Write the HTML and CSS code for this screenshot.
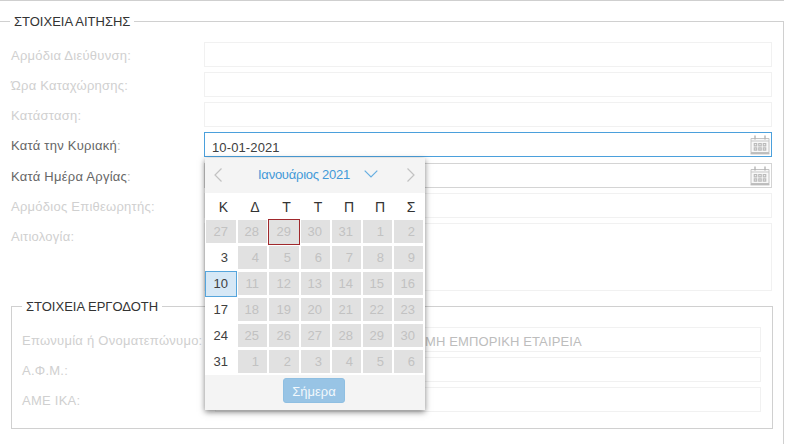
FILE: index.html
```html
<!DOCTYPE html>
<html lang="el">
<head>
    <meta charset="UTF-8">
    <meta name="viewport" content="width=device-width, initial-scale=1.0">
    <title>Στοιχεία Αίτησης</title>
    <link rel="stylesheet" href="styles.css">
</head>

<body>
    <svg width="0" height="0" class="defs">
        <symbol id="calendar" viewBox="0 0 20 20">
            <path d="M1 3.5h18v14H1z" fill="#f8f8f8" stroke="#c4c4c4"/>
            <path d="M1 6h18" stroke="#c8c8c8"/>
            <path d="M.5 18.500h19" stroke="#bcbcbc" stroke-width="1.8"/>
            <path d="M5 .5v4M15 .5v4" stroke="#b4b4b4" stroke-width="1.4"/>
            <path d="M3.700 9.7h12.600M3.700 14h12.600" stroke="#bababa" stroke-width="3.400" stroke-dasharray="3.6 .9"/>
            <path d="M4.800 9.7h11M4.800 14h11" stroke="#ececec" stroke-width="1.2" stroke-dasharray="1.4 3.1"/>
        </symbol>
    </svg>

    <form class="request">
        <div class="group outer">
            <div class="legend">ΣΤΟΙΧΕΙΑ ΑΙΤΗΣΗΣ</div>
            <div class="row disabled"><label>Αρμόδια Διεύθυνση<i>:</i></label><div class="field"></div></div>
            <div class="row disabled"><label>Ώρα Καταχώρησης<i>:</i></label><div class="field"></div></div>
            <div class="row disabled"><label>Κατάσταση<i>:</i></label><div class="field"></div></div>
            <div class="row sunday">
                <label>Κατά την Κυριακή<i>:</i></label>
                <div class="field focus">
                    <span class="value">10-01-2021</span>
                    <svg class="trigger"><use href="#calendar"/></svg>

                    <div class="picker">
                        <div class="picker-head">
                            <svg class="arrow" viewBox="0 0 8 14"><path d="M7.5 .5L1 7l6.5 6.5"/></svg>
                            <span class="month">Ιανουάριος 2021</span>
                            <svg class="down" viewBox="0 0 14 8"><path d="M.7 .7L7 7 13.300 .7"/></svg>
                            <svg class="arrow next" viewBox="0 0 8 14"><path d="M.5 .5L7 7 .5 13.500"/></svg>
                        </div>
                        <div class="days names">
                            <b>Κ</b><b>Δ</b><b>Τ</b><b>Τ</b><b>Π</b><b>Π</b><b>Σ</b>
                        </div>
                        <div class="days">
                            <span class="off">27</span><span class="off">28</span><span class="off today">29</span><span class="off">30</span><span class="off">31</span><span class="off">1</span><span class="off">2</span>
                            <span>3</span><span class="off">4</span><span class="off">5</span><span class="off">6</span><span class="off">7</span><span class="off">8</span><span class="off">9</span>
                            <span class="selected">10</span><span class="off">11</span><span class="off">12</span><span class="off">13</span><span class="off">14</span><span class="off">15</span><span class="off">16</span>
                            <span>17</span><span class="off">18</span><span class="off">19</span><span class="off">20</span><span class="off">21</span><span class="off">22</span><span class="off">23</span>
                            <span>24</span><span class="off">25</span><span class="off">26</span><span class="off">27</span><span class="off">28</span><span class="off">29</span><span class="off">30</span>
                            <span>31</span><span class="off">1</span><span class="off">2</span><span class="off">3</span><span class="off">4</span><span class="off">5</span><span class="off">6</span>
                        </div>
                        <div class="picker-foot"><button type="button" class="btn">Σήμερα</button></div>
                    </div>
                </div>
            </div>
            <div class="row">
                <label>Κατά Ημέρα Αργίας<i>:</i></label>
                <div class="field"><svg class="trigger"><use href="#calendar"/></svg></div>
            </div>
            <div class="row disabled"><label>Αρμόδιος Επιθεωρητής<i>:</i></label><div class="field"></div></div>
            <div class="row disabled"><label>Αιτιολογία<i>:</i></label><div class="field area"></div></div>

            <div class="group inner">
                <div class="legend">ΣΤΟΙΧΕΙΑ ΕΡΓΟΔΟΤΗ</div>
                <div class="row disabled"><label>Επωνυμία ή Ονοματεπώνυμο<i>:</i></label><div class="field"><span class="value company">ΜΗ ΕΜΠΟΡΙΚΗ ΕΤΑΙΡΕΙΑ</span></div></div>
                <div class="row disabled"><label>Α.Φ.Μ.<i>:</i></label><div class="field"></div></div>
                <div class="row disabled"><label>ΑΜΕ ΙΚΑ<i>:</i></label><div class="field"></div></div>
            </div>
        </div>
    </form>
</body>
</html>
```
FILE: styles.css
```css
*
{
    box-sizing: border-box;
}
body
{
    margin: 0;
    height: 444px;
    overflow: hidden;
    background: #fff;
    color: #404040;
    font-family: "Liberation Sans", Arial, sans-serif;
    font-size: 13px;
}
.defs{
    display: block;
}
.request{
    width: 784px;
    border-top: 1px solid #cfcfcf;
    padding-top: 20px;
}
.group{
    border: 1px solid #d0d0d0;
}
.outer{
    height: 440px;
    border-left: 0;
    padding: 0 11px;
}
.inner{
    width: 762px;
    height: 123px;
    margin-top: 15px;
    padding: 0 11px 0 10px;
}
.legend{
    width: fit-content;
    height: 20px;
    margin-top: -10px;
    margin-bottom: 10px;
    padding: 0 4px;
    background: #fff;
    line-height: 20px;
    color: #333;
}
.outer > .legend{
    margin-left: -1px;
}

/* form rows */
.row{
    display: flex;
    margin-bottom: 5px;
}
.row label{
    width: 193px;
    flex: none;
    line-height: 27px;
    height: 25px;
    white-space: nowrap;
    letter-spacing: 0.25px;
    color: #666;
}
.row label i{
    font-style: normal;
    color: #b5b5b5;
}
.row.disabled label, .row.disabled label i{
    color: #d0d0d0;
}
.sunday{
    margin-bottom: 6px;
}
.field{
    position: relative;
    display: flex;
    flex: 1;
    justify-content: flex-end;
    height: 25px;
    border: 1px solid #d4d4d4;
}
.disabled .field{
    border-color: #f1f1f1;
}
.field.focus{
    border-color: #4ba0dc;
}
.field.area{
    height: 68px;
}
.value{
    flex: 1;
    padding-left: 7px;
    line-height: 30px;
    height: 23px;
    white-space: nowrap;
    letter-spacing: 0.12px;
}
.company{
    padding-left: 209px;
    line-height: 27px;
    color: #bdbdbd;
}
.trigger{
    width: 20px;
    height: 20px;
    margin: 2px 1px 0 0;
}

/* date picker */
.picker{
    position: absolute;
    left: 0;
    top: 25px;
    z-index: 5;
    width: 220px;
    background: #fff;
    box-shadow: 0 2px 6px rgba(0, 0, 0, 0.5);
}
.picker-head{
    display: flex;
    align-items: center;
    height: 35px;
    padding: 0 10px 0 9px;
    background: #f4f4f4;
    color: #4399d8;
}
.picker svg{
    fill: none;
    stroke-width: 1.2;
}
.arrow{
    width: 8px;
    height: 14px;
    position: relative;
    top: -1px;
    stroke: #c2c2c2;
}
.month{
    width: 92px;
    margin-left: 36px;
    line-height: 33px;
    height: 35px;
    white-space: nowrap;
    letter-spacing: -0.25px;
}
.down{
    width: 14px;
    height: 8px;
    margin: 0 0 3px 14px;
    stroke: #66aee0;
}
.next{
    margin-left: auto;
}
.days{
    display: grid;
    grid-template-columns: 32px 31px 32px repeat(4, 31px);
    grid-auto-rows: 26px;
    line-height: 26px;
}
.names b{
    padding-left: 5px;
    font-weight: normal;
    font-size: 14px;
    line-height: 28px;
    text-align: center;
    color: #333;
}
.days span{
    padding-right: 8px;
    text-align: right;
    border: solid #fff;
    border-width: 1px 1px 2px;
    line-height: 24px;
}
.days .off{
    background: #e1e1e1;
    color: #c2c2c2;
}
.days .today{
    border: 1px solid #a0282c;
}
.days .selected{
    border: 1px solid #55a5dc;
    background: #d6e8f6;
}
.picker-foot{
    display: flex;
    justify-content: center;
    height: 35px;
    padding: 3px 2px 0 0;
    background: #f4f4f4;
}
.btn{
    width: 62px;
    height: 25px;
    padding: 0;
    border: 1px solid #8fbfe2;
    border-radius: 3px;
    background: #98c4e5;
    color: #f2f8fc;
    font: 13px/25px "Liberation Sans", Arial, sans-serif;
}
```
